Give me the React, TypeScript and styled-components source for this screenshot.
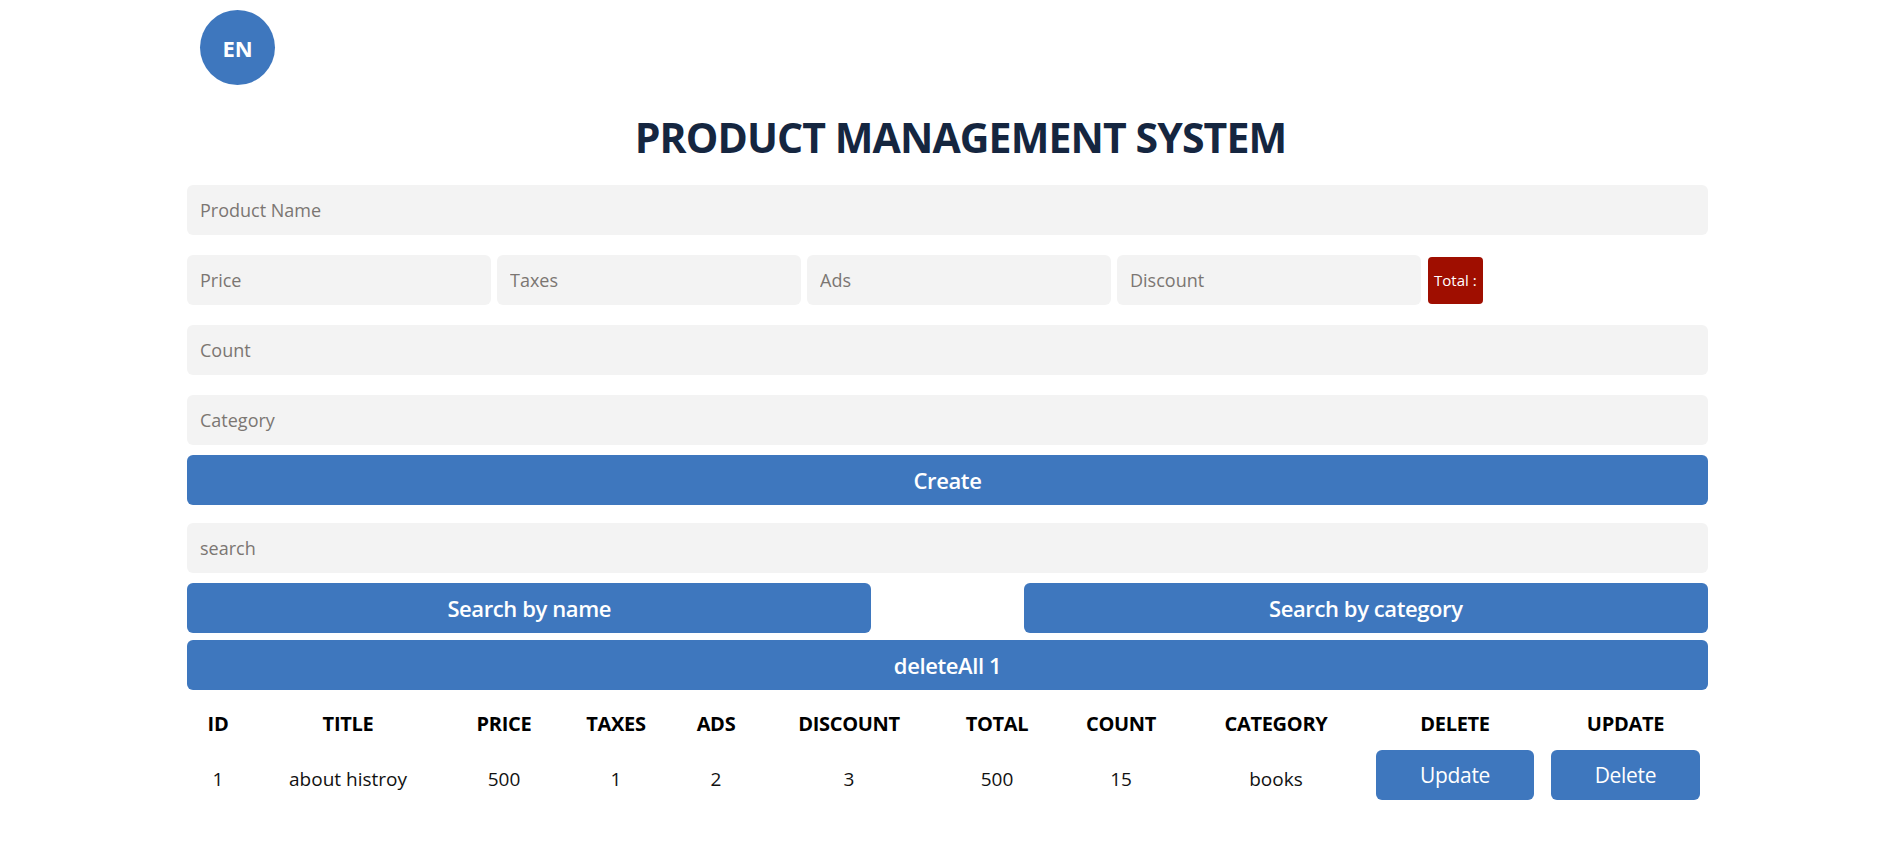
import React from "react";
import styled, { createGlobalStyle } from "styled-components";

const GlobalStyle = createGlobalStyle`
  * { box-sizing: border-box; }
  html, body { margin: 0; padding: 0; background: #ffffff; }
  body { font-family: "Open Sans", "Noto Sans", "Liberation Sans", sans-serif; color: #111; }
`;

const BLUE = "#3e77be";

const Page = styled.div`
  width: 1521px;
  margin: 0 auto;
  display: flex;
  flex-direction: column;
`;

const LangButton = styled.button`
  width: 75px;
  height: 75px;
  margin: 10px 0 0 13px;
  border: none;
  border-radius: 50%;
  background: ${BLUE};
  color: #fff;
  font-family: inherit;
  font-size: 22px;
  font-weight: 700;
  display: flex;
  align-items: center;
  justify-content: center;
  padding: 0;
`;

const Title = styled.h1`
  margin: 27px 0 13px;
  padding-left: 26px;
  text-align: center;
  font-size: 41px;
  line-height: 50px;
  font-weight: 700;
  color: #152640;
  letter-spacing: -0.9px;
  text-transform: uppercase;
`;

const Form = styled.div`
  display: flex;
  flex-direction: column;
`;

const TextInput = styled.input<{ $width?: string }>`
  width: ${(p) => p.$width ?? "100%"};
  height: 50px;
  margin: 10px 0;
  border: none;
  outline: none;
  border-radius: 6px;
  background: #f3f3f3;
  padding: 0 13px;
  font-family: inherit;
  font-size: 18px;
  color: #222;
  &::placeholder { color: #7b7672; }
`;

const PriceRow = styled.div`
  display: flex;
  align-items: center;
  gap: 6px;
`;

const TotalBadge = styled.small`
  height: 47px;
  margin-left: 1px;
  padding: 0 6px;
  display: flex;
  align-items: center;
  background: #9f0e00;
  color: #fff;
  border-radius: 4px;
  font-size: 15px;
`;

const ActionButton = styled.button<{ $width?: string; $mb?: number }>`
  width: ${(p) => p.$width ?? "100%"};
  height: 50px;
  margin: 0 0 ${(p) => p.$mb ?? 0}px;
  border: none;
  border-radius: 6px;
  background: ${BLUE};
  color: #fff;
  font-family: inherit;
  font-size: 22px;
  font-weight: 600;
  letter-spacing: -0.4px;
  cursor: pointer;
`;

const SearchRow = styled.div`
  display: flex;
  justify-content: space-between;
`;

const Table = styled.table`
  width: 100%;
  margin-top: 14px;
  border-collapse: collapse;
  table-layout: fixed;
  text-align: center;
`;

const HeadCell = styled.th`
  height: 38px;
  padding: 0;
  font-size: 20px;
  font-weight: 700;
  color: #000;
  text-transform: uppercase;
  letter-spacing: -0.3px;
`;

const Cell = styled.td<{ $action?: boolean }>`
  height: 66px;
  padding: ${(p) => (p.$action ? "0" : "8px 0 0")};
  font-size: 19px;
  color: #111;
  vertical-align: middle;
`;

const RowButton = styled.button`
  height: 50px;
  padding: 0 44px;
  border: none;
  border-radius: 6px;
  background: ${BLUE};
  color: #fff;
  font-family: inherit;
  font-size: 21px;
  font-weight: 400;
  letter-spacing: -0.3px;
  cursor: pointer;
`;

const columns = [
  { label: "id", w: 62 },
  { label: "title", w: 198 },
  { label: "price", w: 114 },
  { label: "taxes", w: 110 },
  { label: "ads", w: 90 },
  { label: "discount", w: 176 },
  { label: "total", w: 120 },
  { label: "count", w: 128 },
  { label: "category", w: 182 },
  { label: "delete", w: 176 },
  { label: "update", w: 165 },
];

const rows = [
  { id: 1, title: "about histroy", price: 500, taxes: 1, ads: 2, discount: 3, total: 500, count: 15, category: "books" },
];

export default function App() {
  return (
    <>
      <GlobalStyle />
      <Page>
        <LangButton>EN</LangButton>
        <Title>Product Management System</Title>
        <Form>
          <TextInput placeholder="Product Name" />
          <PriceRow>
            <TextInput $width="304px" placeholder="Price" />
            <TextInput $width="304px" placeholder="Taxes" />
            <TextInput $width="304px" placeholder="Ads" />
            <TextInput $width="304px" placeholder="Discount" />
            <TotalBadge>Total :</TotalBadge>
          </PriceRow>
          <TextInput placeholder="Count" />
          <TextInput placeholder="Category" />
          <ActionButton $mb={8}>Create</ActionButton>
          <TextInput placeholder="search" />
          <SearchRow>
            <ActionButton $width="45%" $mb={7}>Search by name</ActionButton>
            <ActionButton $width="45%" $mb={7}>Search by category</ActionButton>
          </SearchRow>
          <ActionButton>deleteAll 1</ActionButton>
        </Form>
        <Table>
          <colgroup>
            {columns.map((c) => (
              <col key={c.label} style={{ width: c.w }} />
            ))}
          </colgroup>
          <thead>
            <tr>
              {columns.map((c) => (
                <HeadCell key={c.label}>{c.label}</HeadCell>
              ))}
            </tr>
          </thead>
          <tbody>
            {rows.map((r) => (
              <tr key={r.id}>
                <Cell>{r.id}</Cell>
                <Cell>{r.title}</Cell>
                <Cell>{r.price}</Cell>
                <Cell>{r.taxes}</Cell>
                <Cell>{r.ads}</Cell>
                <Cell>{r.discount}</Cell>
                <Cell>{r.total}</Cell>
                <Cell>{r.count}</Cell>
                <Cell>{r.category}</Cell>
                <Cell $action><RowButton>Update</RowButton></Cell>
                <Cell $action><RowButton>Delete</RowButton></Cell>
              </tr>
            ))}
          </tbody>
        </Table>
      </Page>
    </>
  );
}
